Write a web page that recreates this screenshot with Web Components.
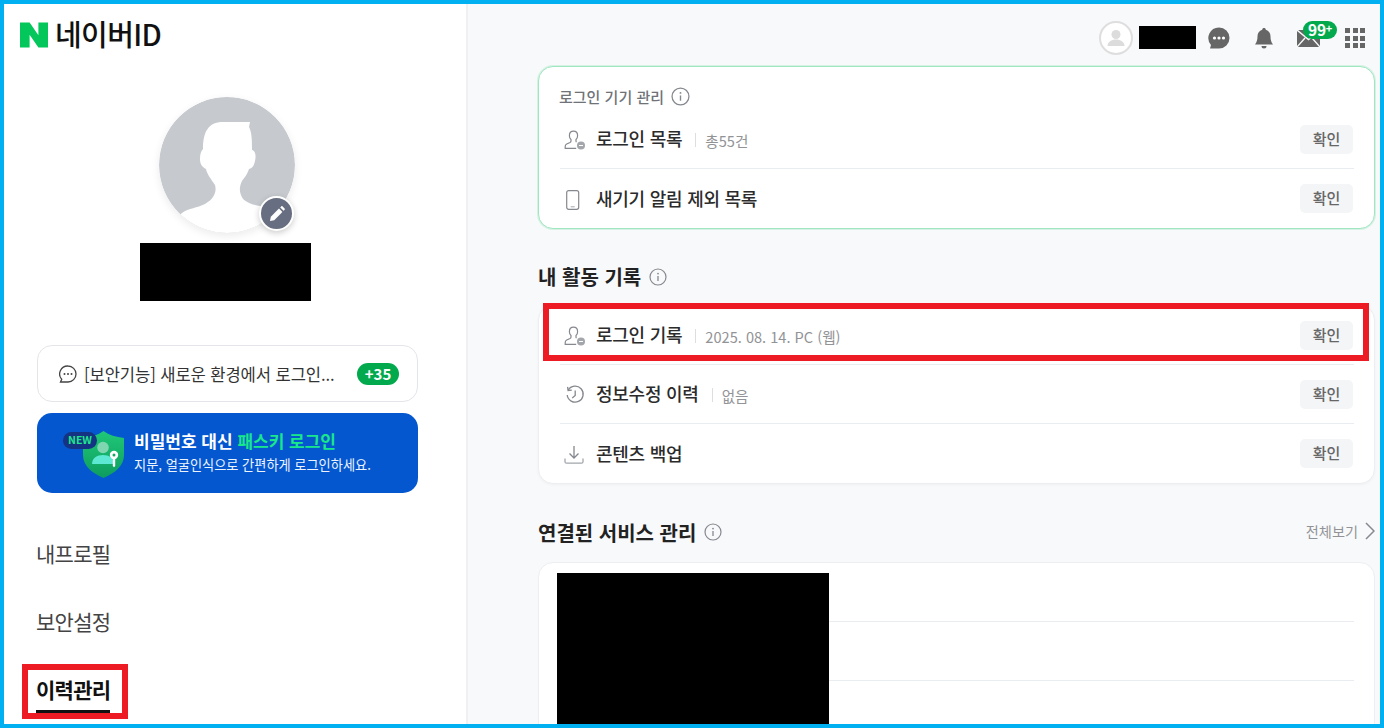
<!DOCTYPE html>
<html lang="ko">
<head>
<meta charset="utf-8">
<title>네이버ID</title>
<style>
html, body { margin: 0; padding: 0; background: #fff; }
body { font-family: "Noto Sans CJK KR", "Noto Sans", sans-serif; color: #222; }
</style>
</head>
<body>
<app-frame>
  <side-bar slot="side"></side-bar>
  <main-pane slot="main">
    <top-bar></top-bar>
    <info-card tone="green">
      <card-caption>로그인 기기 관리</card-caption>
      <card-row icon="user" label="로그인 목록" meta="총55건"></card-row>
      <card-row icon="phone" label="새기기 알림 제외 목록" last></card-row>
    </info-card>
    <section-head>내 활동 기록</section-head>
    <info-card>
      <card-row icon="user" label="로그인 기록" meta="2025. 08. 14. PC (웹)" marked></card-row>
      <card-row icon="history" label="정보수정 이력" meta="없음"></card-row>
      <card-row icon="download" label="콘텐츠 백업" last></card-row>
    </info-card>
    <section-head more>연결된 서비스 관리</section-head>
    <service-card></service-card>
  </main-pane>
</app-frame>

<script>
(function() {
  const ICONS = {
    info: `<svg width="18" height="18" viewBox="0 0 18 18" fill="none"><circle cx="9" cy="9" r="8" stroke="#85888e" stroke-width="1.200"/><path d="M9 8v5" stroke="#85888e" stroke-width="1.300"/><circle cx="9" cy="5.600" r=".9" fill="#85888e"/></svg>`,
    user: `<svg width="22" height="20" viewBox="0 0 22 20" fill="none"><path d="M9.500 1.200c-2.500 0-4.100 2-4.100 4.500 0 1.600.7 3 1.600 3.800v1.500c0 .7-.4 1.200-1 1.500l-3.300 1.500c-1 .5-1.500 1.300-1.500 2.400v1.900h11M9.500 1.200c2.500 0 4.100 2 4.100 4.500 0 1.600-.7 3-1.600 3.800v1.500c0 .5.200.9.500 1.200" stroke="#85888e" stroke-width="1.200"/><circle cx="17" cy="15.500" r="4" fill="#a3a6ab"/><path d="M15 15.500h4" stroke="#fff" stroke-width="1"/></svg>`,
    phone: `<svg width="22" height="20" viewBox="0 0 22 20" fill="none"><rect x="2.700" y=".7" width="12" height="18.600" rx="2" stroke="#85888e" stroke-width="1.200"/><path d="M6.700 16.800h4" stroke="#a3a6ab" stroke-width="1"/></svg>`,
    history: `<svg width="22" height="20" viewBox="0 0 22 20" fill="none"><path d="M4.200 5.200A8 8 0 1 1 3.200 10" stroke="#85888e" stroke-width="1.300"/><path d="M3.600 1.800l.5 3.700 3.700-.4" stroke="#85888e" stroke-width="1.300"/><path d="M11.200 5.500v5l-3 2.500" stroke="#85888e" stroke-width="1.300"/></svg>`,
    download: `<svg width="22" height="20" viewBox="0 0 22 20" fill="none"><path d="M10 1v11.500M5.500 8.500l4.500 4.500 4.500-4.500" stroke="#85888e" stroke-width="1.300"/><path d="M1 13.500v3.200c0 .9.600 1.500 1.500 1.500h15c.9 0 1.500-.6 1.500-1.500v-3.200" stroke="#a3a6ab" stroke-width="1.300"/></svg>`
  };

  class AppFrame extends HTMLElement {
    constructor() {
      super();
      this.attachShadow({mode: 'open'}).innerHTML = `
<style>
:host { display: flex; box-sizing: border-box; width: 1384px; height: 728px; border: 4px solid #00b0f0; overflow: hidden; background: #f8f9fb; }
</style>
<slot name="side"></slot>
<slot name="main"></slot>`;
    }
  }

  class SideBar extends HTMLElement {
    constructor() {
      super();
      this.attachShadow({mode: 'open'}).innerHTML = `
<style>
:host { display: block; flex: none; width: 462px; height: 720px; background: #fff; border-right: 2px solid #eef0f3; }
#logo { display: flex; align-items: center; gap: 7px; margin: 18px 0 0 16px; height: 26px; font-size: 29px; line-height: 26px; font-weight: 500; color: #111; letter-spacing: -0.6px; }
#logo svg { flex: none; }
#logo span { margin-top: -4px; }
#photo { position: relative; width: 136px; height: 136px; margin: 49px 0 0 155px; }
#photo .pic { display: block; border-radius: 50%; box-shadow: 0 3px 8px rgba(0,0,0,.08); }
#edit { position: absolute; left: 100px; top: 99px; box-sizing: border-box; width: 35px; height: 35px; border-radius: 50%; background: #686e81; border: 2px solid #fff; box-shadow: 0 2px 6px rgba(0,0,0,.2); display: flex; align-items: center; justify-content: center; }
#name { width: 171px; height: 58px; margin: 10px 0 0 136px; background: #000; }
#stack { display: flex; flex-direction: column; gap: 11px; margin: 44px 48px 0 33px; }
#menu { display: flex; flex-direction: column; margin: 28px 0 0 33px; }
</style>
<div id="logo">
  <svg width="28" height="26" viewBox="0 0 28 26"><path d="M0 0.500h9.600l8.800 12.700V.5H28v25h-9.600L9.600 12.800v12.700H0z" fill="#03c75a"/></svg>
  <span>네이버ID</span>
</div>
<div id="photo">
  <svg class="pic" width="136" height="136" viewBox="0 0 136 136">
    <defs><clipPath id="c"><circle cx="68" cy="68" r="68"/></clipPath></defs>
    <g clip-path="url(#c)">
      <rect width="136" height="136" fill="#c6cacf"/>
      <path d="M44 52C44 34 50 26 62 25L91 25 90 30C93 36 93 44 93 53 97 54 97 60 96 64 95 68 94 71 90 72 88 78 85 81 83 84 80 90 80 96 84 102 89 107 98 109 108 110L140 140H-4L23 116C30 111 38 111 46 107 55 102 58 95 56 88 52 82 48 77 47 72 43 70 41 67 41 62 41 57 42 54 44 52Z" fill="#fff"/>
    </g>
  </svg>
  <div id="edit"><svg width="18" height="18" viewBox="0 0 18 18"><path d="M2 16l.8-4.200L11 3.600l3.400 3.400-8.200 8.200z" fill="#fff"/><path d="M12.200 2.400l1-1c.4-.4 1-.4 1.400 0l2 2c.4.4.4 1 0 1.400l-1 1z" fill="#fff"/></svg></div>
</div>
<div id="name"></div>
<div id="stack">
  <notice-pill count="+35">[보안기능] 새로운 환경에서 로그인...</notice-pill>
  <passkey-banner></passkey-banner>
</div>
<div id="menu">
  <menu-item>내프로필</menu-item>
  <menu-item>보안설정</menu-item>
  <menu-item active>이력관리</menu-item>
</div>`;
    }
  }

  class NoticePill extends HTMLElement {
    constructor() {
      super();
      this.attachShadow({mode: 'open'}).innerHTML = `
<style>
:host { display: flex; align-items: center; box-sizing: border-box; height: 57px; padding: 0 18px 0 21px; background: #fff; border: 1px solid #e3e5ea; border-radius: 15px; }
svg { flex: none; }
#t { margin-left: 7px; font-size: 16.600px; font-weight: 400; color: #333; white-space: nowrap; letter-spacing: -.1px; }
#n { margin-left: auto; background: #03a94d; color: #fff; font-size: 15px; font-weight: 700; height: 22px; line-height: 21px; width: 42px; text-align: center; border-radius: 11px; }
</style>
<svg width="18" height="18" viewBox="0 0 18 18" fill="none"><path d="M9 1a8 8 0 0 1 0 16H1.500l1.200-2.700A8 8 0 0 1 9 1z" stroke="#444" stroke-width="1.300"/><circle cx="5.500" cy="9" r="1" fill="#444"/><circle cx="9" cy="9" r="1" fill="#444"/><circle cx="12.500" cy="9" r="1" fill="#444"/></svg>
<span id="t"><slot></slot></span>
<span id="n"></span>`;
      this.shadowRoot.querySelector('#n').textContent = this.getAttribute('count');
    }
  }

  class PasskeyBanner extends HTMLElement {
    constructor() {
      super();
      this.attachShadow({mode: 'open'}).innerHTML = `
<style>
:host { display: flex; align-items: center; box-sizing: border-box; height: 80px; padding-left: 46px; background: #0457cf; border-radius: 15px; color: #fff; }
#ico { position: relative; flex: none; width: 41px; height: 47px; margin-top: 2px; }
#new { position: absolute; left: -20px; top: 1px; width: 34px; height: 17px; border-radius: 9px; background: #143382; color: #1fe88c; font-size: 10.500px; font-weight: 700; line-height: 16px; text-align: center; }
#txt { margin: -3px 0 0 10px; display: flex; flex-direction: column; }
b { font-size: 17px; line-height: 24px; font-weight: 700; white-space: nowrap; }
b i { font-style: normal; color: #19e88a; }
span.s { font-size: 13.200px; line-height: 20px; font-weight: 400; white-space: nowrap; margin-top: 2px; color: #eef4ff; }
</style>
<div id="ico">
  <svg width="41" height="47" viewBox="0 0 41 47">
    <defs><linearGradient id="g" x1="0" y1="0" x2="0" y2="1"><stop offset="0" stop-color="#20c878"/><stop offset="1" stop-color="#0d9c5e"/></linearGradient></defs>
    <path d="M20.500 0C26 4 33 6 41 7v17c0 11-9 18-20.500 23C9 42 0 35 0 24V7C8 6 15 4 20.500 0z" fill="url(#g)"/>
    <circle cx="20" cy="16.500" r="5.800" fill="#7fd6b0"/>
    <path d="M9 33c0-6 5-9 11-9s11 3 11 9z" fill="#5ce8d2"/>
    <circle cx="31" cy="24" r="4.200" fill="#fff"/><circle cx="31" cy="24" r="1.500" fill="#12a765"/>
    <path d="M29.800 27h2.400v8l-1.200 1.300-1.200-1.300z" fill="#fff"/>
  </svg>
  <span id="new">NEW</span>
</div>
<div id="txt">
  <b>비밀번호 대신 <i>패스키 로그인</i></b>
  <span class="s">지문, 얼굴인식으로 간편하게 로그인하세요.</span>
</div>`;
    }
  }

  class MenuItem extends HTMLElement {
    constructor() {
      super();
      this.attachShadow({mode: 'open'}).innerHTML = `
<style>
:host { display: flex; align-items: flex-start; box-sizing: border-box; height: 68px; padding-top: 17px; font-size: 21px; letter-spacing: -.7px; color: #444; }
#l { position: relative; display: block; line-height: 30px; padding-bottom: 6px; border-bottom: 3px solid transparent; white-space: nowrap; margin-left: -1px; }
:host([active]) #l { color: #111; font-weight: 700; border-bottom-color: #111; }
#mark { display: none; position: absolute; box-sizing: border-box; left: -14px; right: -18px; top: -10px; bottom: -9px; border: 6px solid #ed1c24; }
:host([active]) #mark { display: block; }
</style>
<span id="l"><slot></slot><span id="mark"></span></span>`;
    }
  }

  class MainPane extends HTMLElement {
    constructor() {
      super();
      this.attachShadow({mode: 'open'}).innerHTML = `
<style>
:host { display: block; box-sizing: border-box; width: 912px; height: 720px; padding: 0 5px 0 70px; background: #f8f9fb; }
</style>
<slot></slot>`;
    }
  }

  class TopBar extends HTMLElement {
    constructor() {
      super();
      this.attachShadow({mode: 'open'}).innerHTML = `
<style>
:host { display: flex; align-items: center; justify-content: flex-end; height: 62px; margin-right: -5px; padding: 6px 15px 0 0; box-sizing: border-box; }
#av { box-sizing: border-box; width: 34px; height: 34px; border: 2px solid #dedede; border-radius: 50%; background: #fff; display: flex; align-items: center; justify-content: center; }
#nm { width: 57px; height: 23px; margin: 0 0 2px 6px; background: #000; }
#chat { margin-left: 12px; }
#bell { margin-left: 23px; }
#mail { position: relative; margin-left: 22px; width: 23px; height: 17px; margin-top: 1px; }
#mail svg { display: block; }
#badge { position: absolute; left: 6px; top: -9px; width: 34px; height: 18px; border-radius: 9px; background: #03a94d; color: #fff; font-size: 15.500px; line-height: 17px; font-weight: 700; text-align: center; white-space: nowrap; letter-spacing: -.3px; }
#badge sup { font-size: 11px; line-height: 0; vertical-align: 3px; }
#grid { margin-left: 25px; display: grid; grid-template-columns: repeat(3, 5px); grid-auto-rows: 5px; gap: 2.500px; }
#grid i { background: #666; }
</style>
<div id="av"><svg width="20" height="20" viewBox="0 0 20 20"><circle cx="10" cy="6.500" r="4.500" fill="#dcdcdc"/><path d="M1.500 18c0-4 4-6.500 8.500-6.500s8.500 2.500 8.500 6.500z" fill="#dcdcdc"/></svg></div>
<div id="nm"></div>
<svg id="chat" width="22" height="22" viewBox="0 0 22 22"><path d="M11 0.500a10.500 10.500 0 0 1 0 21H2l1-3.600A10.500 10.500 0 0 1 11 .5z" fill="#666"/><circle cx="6.500" cy="11" r="1.600" fill="#fff"/><circle cx="11" cy="11" r="1.600" fill="#fff"/><circle cx="15.500" cy="11" r="1.600" fill="#fff"/></svg>
<svg id="bell" width="22" height="22" viewBox="0 0 22 22"><path d="M11 1c1 0 1.800.7 1.800 1.700 3 .8 4.700 3.400 4.700 6.600 0 3.500.7 6 2.500 8.200H2c1.800-2.200 2.500-4.700 2.500-8.200 0-3.200 1.700-5.800 4.700-6.600C9.200 1.700 10 1 11 1z" fill="#666"/><path d="M8.500 19h5a2.500 2.500 0 0 1-5 0z" fill="#666"/></svg>
<div id="mail">
  <svg width="23" height="17" viewBox="0 0 23 17"><rect width="23" height="17" fill="#666"/><path d="M0 0l11.500 9.500L23 0M0 17l8-9M23 17l-8-9" stroke="#f8f9fb" stroke-width="1.400" fill="none"/></svg>
  <span id="badge">99<sup>+</sup></span>
</div>
<div id="grid"><i></i><i></i><i></i><i></i><i></i><i></i><i></i><i></i><i></i></div>`;
    }
  }

  class InfoCard extends HTMLElement {
    constructor() {
      super();
      this.attachShadow({mode: 'open'}).innerHTML = `
<style>
:host { display: block; box-sizing: border-box; width: 837px; padding: 0 20px 0 21px; background: #fff; border: 1px solid #eceef1; border-radius: 15px; box-shadow: 0 1px 3px rgba(0,0,0,.04); }
:host([tone="green"]) { border-color: #a0e6c0; box-shadow: 0 0 0 1px rgba(166,232,196,.4); }
</style>
<slot></slot>`;
    }
  }

  class CardCaption extends HTMLElement {
    constructor() {
      super();
      this.attachShadow({mode: 'open'}).innerHTML = `
<style>
:host { display: flex; align-items: center; gap: 7px; height: 43px; padding-top: 15px; margin-left: -1px; box-sizing: border-box; font-size: 15px; font-weight: 500; color: #6f7378; }
svg { display: block; margin-top: 1px; }
</style>
<slot></slot>${ICONS.info.replace('width="18" height="18"', 'width="19" height="19"')}`;
    }
  }

  class CardRow extends HTMLElement {
    constructor() {
      super();
      let meta = this.getAttribute('meta');
      this.attachShadow({mode: 'open'}).innerHTML = `
<style>
:host { position: relative; display: flex; align-items: center; box-sizing: border-box; height: 59px; padding: 0 1px 0 4px; border-bottom: 1px solid #e9edf1; }
:host([last]) { border-bottom: 0; }
#i { display: block; flex: none; width: 22px; height: 20px; margin-top: 2px; }
#l { margin: -2px 0 0 10px; font-size: 18px; font-weight: 500; color: #2b2b2b; white-space: nowrap; letter-spacing: -.25px; }
#s { width: 1px; height: 14px; background: #dcdee2; margin: 2px 9px 0 13px; }
#m { font-size: 14.600px; color: #929396; margin-top: 3px; white-space: nowrap; }
#b { margin-left: auto; width: 53px; height: 29px; line-height: 27px; border-radius: 5px; background: #f4f5f7; color: #666; font-size: 15px; font-weight: 500; text-align: center; }
#mark { position: absolute; box-sizing: border-box; left: -17px; right: -15px; top: -3px; bottom: 3px; border: 6px solid #ed1c24; }
</style>
<span id="i">${ICONS[this.getAttribute('icon')]}</span>
<span id="l"></span>
${meta ? '<span id="s"></span><span id="m"></span>' : ''}
<span id="b">확인</span>
${this.hasAttribute('marked') ? '<span id="mark"></span>' : ''}`;
      this.shadowRoot.querySelector('#l').textContent = this.getAttribute('label');
      if (meta) this.shadowRoot.querySelector('#m').textContent = meta;
    }
  }

  class SectionHead extends HTMLElement {
    constructor() {
      super();
      this.attachShadow({mode: 'open'}).innerHTML = `
<style>
:host { display: flex; align-items: center; gap: 8px; box-sizing: border-box; width: 837px; height: 76px; padding-top: 19px; font-size: 20px; font-weight: 700; color: #222; }
#more { margin-left: auto; display: none; align-items: center; gap: 7px; margin-top: -2px; font-size: 14.200px; font-weight: 400; color: #929396; }
:host([more]) #more { display: flex; }
:host([more]) { height: 78px; padding-top: 18px; }
svg { display: block; }
</style>
<slot></slot>${ICONS.info}
<span id="more">전체보기<svg width="10" height="18" viewBox="0 0 10 18" fill="none"><path d="M1 1l8 8-8 8" stroke="#85888e" stroke-width="1.500"/></svg></span>`;
    }
  }

  class ServiceCard extends HTMLElement {
    constructor() {
      super();
      this.attachShadow({mode: 'open'}).innerHTML = `
<style>
:host { display: grid; grid-template-columns: 272px 1fr; box-sizing: border-box; width: 837px; height: 220px; padding: 10px 20px 0 18px; background: #fff; border: 1px solid #eceef1; border-radius: 15px 15px 0 0; }
#hide { background: #000; height: 190px; }
.r { height: 48px; border-bottom: 1px solid #e9edf1; }
.r + .r { height: 58px; }
</style>
<div id="hide"></div>
<div><div class="r"></div><div class="r"></div></div>`;
    }
  }

  customElements.define('app-frame', AppFrame);
  customElements.define('side-bar', SideBar);
  customElements.define('notice-pill', NoticePill);
  customElements.define('passkey-banner', PasskeyBanner);
  customElements.define('menu-item', MenuItem);
  customElements.define('main-pane', MainPane);
  customElements.define('top-bar', TopBar);
  customElements.define('info-card', InfoCard);
  customElements.define('card-caption', CardCaption);
  customElements.define('card-row', CardRow);
  customElements.define('section-head', SectionHead);
  customElements.define('service-card', ServiceCard);
})();
</script>
</body>
</html>
